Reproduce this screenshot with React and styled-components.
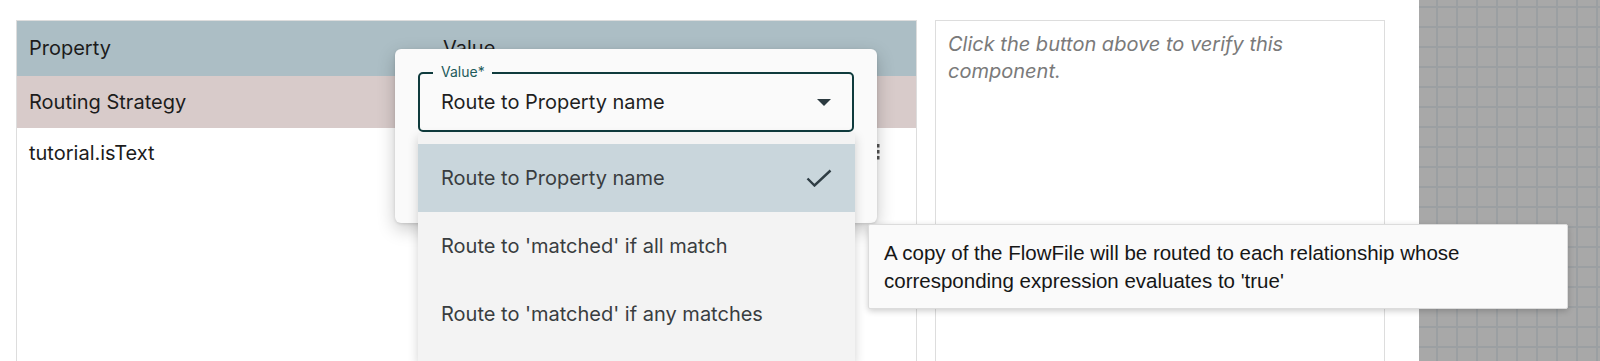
import React from 'react';
import styled, { createGlobalStyle } from 'styled-components';

const Global = createGlobalStyle`
  html, body {
    margin: 0;
    padding: 0;
    background: #ffffff;
  }
  body {
    font-family: Inter, "Noto Sans", sans-serif;
    overflow: hidden;
  }
`;

const Page = styled.div`
  position: relative;
  display: flex;
  height: 361px;
  overflow: hidden;
`;

const Main = styled.div`
  display: flex;
  gap: 18px;
  padding: 20px 34px 0 16px;
  background: #ffffff;
`;

const Table = styled.div`
  box-sizing: border-box;
  width: 901px;
  border: 1px solid #dddddd;
  border-bottom: none;
  display: flex;
  flex-direction: column;
  font-size: 20px;
  color: #1c1c1c;
`;

const Row = styled.div`
  display: grid;
  grid-template-columns: 414px 1fr 40px;
  align-items: ${p => (p.$top ? 'start' : 'center')};
  height: ${p => p.$h}px;
  background: ${p => p.$bg || 'transparent'};
  line-height: 27px;
  box-sizing: border-box;
  padding-top: ${p => (p.$top ? '12px' : '0')};
`;

const Cell = styled.div`
  padding-left: 12px;
  white-space: nowrap;
`;

const Kebab = styled.div`
  display: flex;
  justify-content: flex-start;
  padding-top: 4px;
`;

const Panel = styled.div`
  box-sizing: border-box;
  width: 450px;
  border: 1px solid #dddddd;
  border-bottom: none;
  padding: 10px 12px;
  font-size: 20px;
  line-height: 27px;
  font-style: italic;
  color: #7a7a7a;
`;

const Canvas = styled.div`
  flex: 1;
  background-color: #a8a8a8;
  background-image:
    linear-gradient(to right, #9b9fa2 2px, transparent 2px),
    linear-gradient(to bottom, #9b9fa2 2px, transparent 2px);
  background-size: 20px 20px;
  background-position: 17px 6px;
`;

const Dialog = styled.div`
  position: absolute;
  left: 395px;
  top: 49px;
  width: 482px;
  height: 174px;
  box-sizing: border-box;
  padding: 23px;
  background: #fafafa;
  border-radius: 6px;
  box-shadow: 0 6px 18px rgba(0, 0, 0, 0.22), 0 1px 3px rgba(0, 0, 0, 0.12);
`;

const Field = styled.div`
  position: relative;
  box-sizing: border-box;
  width: 436px;
  height: 60px;
  border: 2px solid #0f3b3d;
  border-radius: 5px;
  display: flex;
  align-items: center;
  justify-content: space-between;
  padding: 0 21px 0 21px;
  font-size: 20px;
  color: #1f1f1f;
`;

const FieldLabel = styled.span`
  position: absolute;
  left: 13px;
  top: -10px;
  padding: 0 7px 0 8px;
  background: #fafafa;
  font-size: 14px;
  line-height: 16px;
  color: #1d5b5b;
`;

const Arrow = styled.span`
  width: 0;
  height: 0;
  border-left: 7px solid transparent;
  border-right: 7px solid transparent;
  border-top: 7px solid #2c3a40;
`;

const List = styled.div`
  position: absolute;
  left: 418px;
  top: 133px;
  width: 437px;
  padding: 11px 0 14px;
  background: #f3f3f3;
  box-shadow: 0 4px 10px rgba(0, 0, 0, 0.18);
`;

const Option = styled.div`
  height: 68px;
  display: flex;
  align-items: center;
  justify-content: space-between;
  padding: 0 23px;
  font-size: 20px;
  color: #393d40;
  background: ${p => (p.$selected ? '#c9d6dc' : 'transparent')};
`;

const Tooltip = styled.div`
  position: absolute;
  left: 868px;
  top: 224px;
  width: 700px;
  height: 85px;
  box-sizing: border-box;
  padding: 14px 15px;
  background: #fafafa;
  border: 1px solid #dcdcdc;
  border-radius: 2px;
  box-shadow: 0 2px 6px rgba(0, 0, 0, 0.2);
  font-family: "Liberation Sans", Arial, sans-serif;
  font-size: 20.5px;
  line-height: 28px;
  color: #161616;
`;

const TipText = styled.div`
  max-width: 620px;
`;

const Check = () => (
  <svg width="26" height="18" viewBox="0 0 26 18" fill="none">
    <polyline points="1.5,9.5 8.5,16.5 24.5,1.5" stroke="#2f3d44" strokeWidth="2.4" />
  </svg>
);

const Dots = () => (
  <svg width="4" height="16" viewBox="0 0 4 16">
    <rect x="0" y="0" width="3.5" height="3.5" fill="#555" />
    <rect x="0" y="6" width="3.5" height="3.5" fill="#555" />
    <rect x="0" y="12" width="3.5" height="3.5" fill="#555" />
  </svg>
);

const options = [
  "Route to Property name",
  "Route to 'matched' if all match",
  "Route to 'matched' if any matches",
];

const App = () => {
  return (
    <Page>
      <Global />
      <Main>
        <Table>
          <Row $h={55} $bg="#acbec5">
            <Cell>Property</Cell>
            <Cell>Value</Cell>
            <div />
          </Row>
          <Row $h={52} $bg="#d8cbca">
            <Cell>Routing Strategy</Cell>
            <Cell>Route to Property name</Cell>
            <div />
          </Row>
          <Row $h={60} $top>
            <Cell>tutorial.isText</Cell>
            <Cell>${'{'}mime.type:startsWith('text')}</Cell>
            <Kebab>
              <Dots />
            </Kebab>
          </Row>
        </Table>
        <Panel>Click the button above to verify this component.</Panel>
      </Main>
      <Canvas />

      <Dialog>
        <Field>
          <FieldLabel>Value*</FieldLabel>
          <span>Route to Property name</span>
          <Arrow />
        </Field>
      </Dialog>

      <List>
        {options.map((o, i) => (
          <Option key={o} $selected={i === 0}>
            <span>{o}</span>
            {i === 0 && <Check />}
          </Option>
        ))}
      </List>

      <Tooltip>
        <TipText>
          A copy of the FlowFile will be routed to each relationship whose corresponding expression evaluates to 'true'
        </TipText>
      </Tooltip>
    </Page>
  );
};

export default App;
